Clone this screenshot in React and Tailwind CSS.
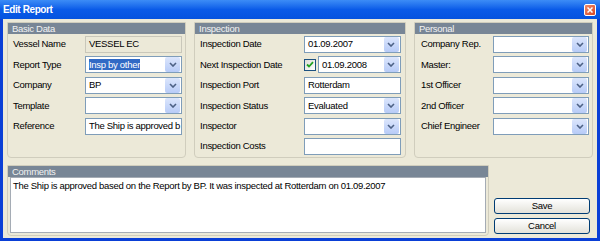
import React from 'react';

const font = { fontFamily: '"Liberation Sans", Arial, sans-serif' };

const Chevron = () => (
  <svg width="8" height="5" viewBox="0 0 8 5">
    <path d="M1 1 L4 4 L7 1" fill="none" stroke="#4D6185" strokeWidth="1.6" />
  </svg>
);

const Field = ({ value, combo, disabled, selected }) => (
  <div
    className={
      disabled
        ? 'flex h-[17px] min-w-0 flex-1 items-center border border-[#C9C7BA] bg-[#ECE9D8] pl-[3px]'
        : 'flex h-[17px] min-w-0 flex-1 items-center border border-[#7F9DB9] bg-white pl-[3px]'
    }
  >
    <span className="min-w-0 flex-1 whitespace-nowrap">
      {selected ? <span className="bg-[#316AC5] text-white">{value}</span> : value}
    </span>
    {combo && (
      <div className="mr-px flex h-[15px] w-[15px] shrink-0 items-center justify-center rounded-[2px] bg-gradient-to-b from-[#DCE6FC] to-[#B7CBF7]">
        <Chevron />
      </div>
    )}
  </div>
);

const Row = ({ label, labelW, children }) => (
  <div className="flex h-[17px] items-center">
    <div className={`shrink-0 ${labelW}`}>{label}</div>
    {children}
  </div>
);

const Group = ({ title, className, children }) => (
  <div className={`flex flex-col rounded-b-[4px] border border-[#D0CDBD] ${className}`}>
    <div className="flex h-[11px] items-center bg-[#788696] pl-[4px] text-[#F2F2F2] leading-none">{title}</div>
    {children}
  </div>
);

export default function App() {
  return (
    <div
      className="flex h-[241px] w-[600px] flex-col bg-[#0A3FD6] text-[9.5px] tracking-[-0.3px] text-black"
      style={font}
    >
      {/* title bar */}
      <div className="flex h-[19px] items-center justify-between bg-gradient-to-b from-[#3C8CF6] via-[#0A5BE8] to-[#0553DF] pl-[3px] pr-[4px]">
        <span className="text-[10px] font-bold tracking-[-0.4px] text-white">Edit Report</span>
        <div className="flex h-[12px] w-[12px] items-center justify-center rounded-[2px] border border-white bg-gradient-to-br from-[#EE8A6A] to-[#D8441E]">
          <svg width="6" height="6" viewBox="0 0 6 6">
            <path d="M0.5 0.5 L5.5 5.5 M5.5 0.5 L0.5 5.5" stroke="white" strokeWidth="1.5" />
          </svg>
        </div>
      </div>

      {/* body */}
      <div className="mx-[3px] mb-[3px] flex flex-1 flex-col bg-[#ECE9D8] px-[4px] pt-[3px] pb-[2px]">
        <div className="flex h-[136px] gap-[8px]">
          <Group title="Basic Data" className="w-[180px]">
            <div className="flex flex-col gap-[3.4px] pl-[5px] pr-[3px] pt-[2px]">
              <Row label="Vessel Name" labelW="w-[72px]"><Field value="VESSEL EC" disabled /></Row>
              <Row label="Report Type" labelW="w-[72px]"><Field value="Insp by other" combo selected /></Row>
              <Row label="Company" labelW="w-[72px]"><Field value="BP" combo /></Row>
              <Row label="Template" labelW="w-[72px]"><Field value="" combo /></Row>
              <Row label="Reference" labelW="w-[72px]"><Field value="The Ship is approved b" /></Row>
            </div>
          </Group>
          <Group title="Inspection" className="w-[213px]">
            <div className="flex flex-col gap-[3.4px] pl-[5px] pr-[4px] pt-[2px]">
              <Row label="Inspection Date" labelW="w-[104px]"><Field value="01.09.2007" combo /></Row>
              <Row label="Next Inspection Date" labelW="w-[104px]">
                <div className="mr-[2px] flex h-[12px] w-[12px] shrink-0 items-center justify-center border border-[#1C5180] bg-gradient-to-br from-[#DCDCD7] to-white">
                  <svg width="8" height="7" viewBox="0 0 8 7">
                    <path d="M1 3.5 L3 5.5 L7 1.2" fill="none" stroke="#21A121" strokeWidth="1.8" />
                  </svg>
                </div>
                <Field value="01.09.2008" combo />
              </Row>
              <Row label="Inspection Port" labelW="w-[104px]"><Field value="Rotterdam" /></Row>
              <Row label="Inspection Status" labelW="w-[104px]"><Field value="Evaluated" combo /></Row>
              <Row label="Inspector" labelW="w-[104px]"><Field value="" combo /></Row>
              <Row label="Inspection Costs" labelW="w-[104px]"><Field value="" /></Row>
            </div>
          </Group>
          <Group title="Personal" className="w-[180px]">
            <div className="flex flex-col gap-[3.4px] pl-[6px] pr-[3px] pt-[2px]">
              <Row label="Company Rep." labelW="w-[72px]"><Field value="" combo /></Row>
              <Row label="Master:" labelW="w-[72px]"><Field value="" combo /></Row>
              <Row label="1st Officer" labelW="w-[72px]"><Field value="" combo /></Row>
              <Row label="2nd Officer" labelW="w-[72px]"><Field value="" combo /></Row>
              <Row label="Chief Engineer" labelW="w-[72px]"><Field value="" combo /></Row>
            </div>
          </Group>
        </div>

        <div className="mt-[7px] flex flex-1 gap-[5px]">
          <Group title="Comments" className="w-[482px]">
            <div className="flex flex-1 px-[2px] pb-[2px]">
              <div className="flex-1 border border-[#A5ACB5] bg-white px-[2px] pt-px">
                The Ship is approved based on the Report by BP. It was inspected at Rotterdam on 01.09.2007
              </div>
            </div>
          </Group>
          <div className="flex w-[96px] flex-col justify-end gap-[4px] pb-[2px]">
            <button className="h-[16px] rounded-[3px] border border-[#003C74] bg-gradient-to-b from-white to-[#E3E2DA] leading-none">Save</button>
            <button className="h-[16px] rounded-[3px] border border-[#003C74] bg-gradient-to-b from-white to-[#E3E2DA] leading-none">Cancel</button>
          </div>
        </div>
      </div>
    </div>
  );
}
